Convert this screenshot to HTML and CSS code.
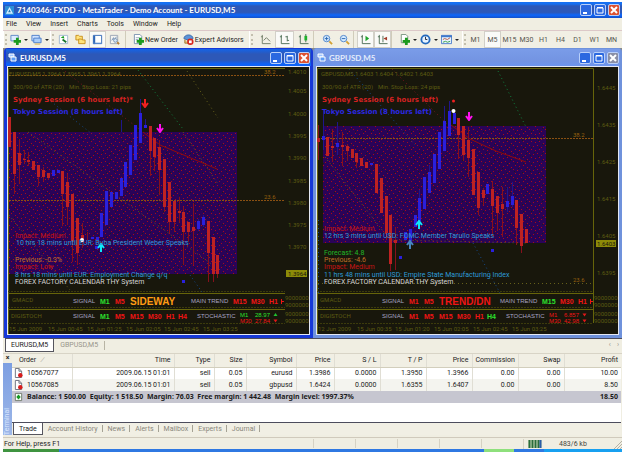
FILE: index.html
```html
<!DOCTYPE html>
<html lang="en">
<head>
<meta charset="utf-8">
<title>7140346: FXDD - MetaTrader - Demo Account - EURUSD,M5</title>
<link rel="stylesheet" href="styles.css">
</head>
<body>
<svg class="defs" aria-hidden="true">
  <defs>
    <pattern id="dots" width="16" height="16" patternUnits="userSpaceOnUse">
      <rect width="16" height="16" fill="#2a0358"/>
      <path fill="#a80d18" d="M1 1h1v1h-1zM5 2h1v1h-1zM9 1h1v1h-1zM13 3h1v1h-1zM3 5h1v1h-1zM7 6h1v1h-1zM11 5h1v1h-1zM15 7h1v1h-1zM1 9h1v1h-1zM5 10h1v1h-1zM9 9h1v1h-1zM13 11h1v1h-1zM3 13h1v1h-1zM7 14h1v1h-1zM11 13h1v1h-1zM15 15h1v1h-1z"/>
      <path fill="#1c1a20" d="M3 3h1v1h-1zM11 3h1v1h-1zM6 8h1v1h-1zM14 9h1v1h-1zM2 11h1v1h-1zM10 12h1v1h-1zM14 0h1v1h-1z"/>
    </pattern>
    <symbol id="arrow-down" viewBox="0 0 8 9"><path d="M4 0v8M1 4l3 4l3-4" fill="none" stroke="currentColor" stroke-width="2"/></symbol>
    <symbol id="arrow-up" viewBox="0 0 8 9"><path d="M4 9v-8M1 5l3-4l3 4" fill="none" stroke="currentColor" stroke-width="2"/></symbol>
    <symbol id="sell-doc" viewBox="0 0 10 11"><path d="M1.500.5h4l3 3v7h-7z" fill="#fff" stroke="#666b78"/><path d="M5.500.5v3h3" fill="none" stroke="#666b78"/><circle cx="7" cy="8" r="2.500" fill="#d81c1c"/></symbol>
    <symbol id="stacked" viewBox="0 0 9 9"><path d="M1 1h5v3h-5z" fill="#9cc4ff" stroke="#fff"/><path d="M3 4h5v4h-5z" fill="#5d9cf5" stroke="#fff"/></symbol>
  </defs>
</svg>

<div class="app">
  <header class="titlebar">
    <svg class="logo" viewBox="0 0 10 10"><rect width="10" height="10" fill="#2c8fd8"/><path d="M1 8.500L5 1l4 7.500z" fill="#d7f0ff"/><path d="M3.500 7L5 4l1.500 3z" fill="#2577b8"/></svg>
    <h1>7140346: FXDD - MetaTrader - Demo Account - EURUSD,M5</h1>
    <div class="controls">
      <button type="button" aria-label="Minimize"><svg viewBox="0 0 10 10"><path d="M2 8h4" stroke="#fff" stroke-width="2"/></svg></button>
      <button type="button" aria-label="Restore"><svg viewBox="0 0 10 10"><path d="M2 3h6v5h-6z M2 2.500h6" fill="none" stroke="#fff"/></svg></button>
      <button type="button" class="close" aria-label="Close"><svg viewBox="0 0 10 10"><path d="M2 2l6 6M8 2l-6 6" stroke="#fff" stroke-width="2"/></svg></button>
    </div>
  </header>

  <nav class="menu">
    <button type="button">File</button><button type="button">View</button><button type="button">Insert</button><button type="button">Charts</button><button type="button">Tools</button><button type="button">Window</button><button type="button">Help</button>
  </nav>

  <div class="toolbar">
    <div class="group">
      <button type="button" class="drop" aria-label="New chart"><svg viewBox="0 0 12 12"><path d="M1 1.500h8v6h-8z" fill="#dcecff" stroke="#5b85c4"/><path d="M8 4v8M4 8h8" stroke="#1b9b1e" stroke-width="3"/></svg></button>
      <button type="button" class="drop" aria-label="Profiles"><svg viewBox="0 0 12 12"><path d="M1 1.500h8v6h-8z" fill="#cfe3ff" stroke="#4b7dc9"/><path d="M3 4.500h8v5h-8z" fill="#a9cdfa" stroke="#4b7dc9"/><path d="M4 11h6" stroke="#e0b040"/></svg></button>
    </div>
    <div class="group">
      <button type="button" aria-label="Market watch"><svg viewBox="0 0 12 12"><path d="M1.500 1.500h9v9h-9z" fill="#fff" stroke="#9fb7d0"/><path d="M3 4l3-2l1 3z" fill="#19a024"/><path d="M5 6l4 3" stroke="#18752a" stroke-width="2" fill="none"/></svg></button>
      <button type="button" aria-label="Navigator"><svg viewBox="0 0 12 12"><path d="M1 1.500h3l1 1h3v4h-7z" fill="#ffe37a" stroke="#c78e1c"/><path d="M4 5.500h3l1 1h3v4h-7z" fill="#ffe37a" stroke="#c78e1c"/></svg></button>
      <button type="button" class="on" aria-label="Terminal"><svg viewBox="0 0 12 12"><path d="M1.500 1.500h9v9h-9z" fill="#fff" stroke="#2f66b5"/><path d="M2.500 2v9" stroke="#2f66b5" stroke-width="2"/><path d="M1 10h10" stroke="#5b8cd1"/></svg></button>
      <button type="button" aria-label="Strategy tester"><svg viewBox="0 0 12 12"><path d="M1.500 1.500h8v9h-8z" fill="#f4f4f0" stroke="#9aa4b4"/><path d="M3 7l2-3l1 3l2-4" stroke="#6b8bb5" fill="none"/><circle cx="7" cy="7" r="2" fill="#d5e6f7" stroke="#7790ad"/><path d="M9 9l2 2" stroke="#b5813a" stroke-width="2"/></svg></button>
    </div>
    <div class="group plain orders">
      <button type="button" class="label"><svg viewBox="0 0 12 12"><path d="M1.500.5h6l2 2v8h-8z" fill="#fff" stroke="#7890ad"/><path d="M3 4h4M3 6h3" stroke="#9aabbd"/><path d="M8 4v8M4 8h8" stroke="#1b9b1e" stroke-width="3"/></svg>New Order</button>
      <button type="button" class="label"><svg viewBox="0 0 12 12"><path d="M1 5a5 4 0 0 1 10 0l-5 2z" fill="#5c93d8" stroke="#3568ad"/><path d="M2 6v4h4" fill="#e7c072" stroke="#9d7a32"/><circle cx="8" cy="8.500" r="3.500" fill="#d8261d"/><path d="M6.500 7h3v3h-3z" fill="#fff"/></svg>Expert Advisors</button>
    </div>
    <div class="group charttype">
      <button type="button" aria-label="Line chart"><svg viewBox="0 0 12 12"><path d="M2.500 1v9.500h9M1 3h2M4 7l3-3l4 4" fill="none" stroke="#6d7a64"/></svg></button>
      <button type="button" class="on" aria-label="Bar chart"><svg viewBox="0 0 12 12"><path d="M2.500 1v9.500h9M1 3h2M9 2v6M7 3h2M9 7h2" fill="none" stroke="#496b52"/></svg></button>
      <button type="button" aria-label="Candlesticks"><svg viewBox="0 0 12 12"><path d="M2.500 1v9.500h9M1 3h2M8.500 0v9" fill="none" stroke="#496b52"/><path d="M7 2h3v5h-3z" fill="#20b12c"/></svg></button>
    </div>
    <div class="group plain zoom">
      <button type="button" aria-label="Zoom in"><svg viewBox="0 0 12 12"><circle cx="5" cy="5" r="3.500" fill="#d5ebff" stroke="#4d83c9"/><path d="M5 3v4M3 5h4" stroke="#2867b2"/><path d="M8 8l3 3" stroke="#d3a133" stroke-width="2"/></svg></button>
      <button type="button" aria-label="Zoom out"><svg viewBox="0 0 12 12"><circle cx="5" cy="5" r="3.500" fill="#d5ebff" stroke="#4d83c9"/><path d="M3 5h4" stroke="#2867b2"/><path d="M8 8l3 3" stroke="#d3a133" stroke-width="2"/></svg></button>
    </div>
    <div class="group plain">
      <button type="button" class="on" aria-label="Auto scroll"><svg viewBox="0 0 12 12"><path d="M2.500 1v9.500h9M1 3h2" fill="none" stroke="#496b52"/><path d="M6 2l4 3l-4 3z" fill="#20a42c"/></svg></button>
      <button type="button" class="on" aria-label="Chart shift"><svg viewBox="0 0 12 12"><path d="M2.500 1v9.500h9M1 3h2M6.500 2v7" fill="none" stroke="#496b52"/><path d="M11 3l-4 2l4 2z" fill="#a23a2a"/></svg></button>
    </div>
    <div class="group plain insert">
      <button type="button" class="drop" aria-label="Indicators"><svg viewBox="0 0 12 12"><path d="M2.500.5h5l2 2v7h-7z" fill="#fff" stroke="#75917a"/><path d="M8 4v8M4 8h8" stroke="#1b9b1e" stroke-width="3"/></svg></button>
      <button type="button" class="drop" aria-label="Periods"><svg viewBox="0 0 12 12"><circle cx="6" cy="6" r="4.500" fill="#e6f3ff" stroke="#2369bd" stroke-width="2"/><path d="M6 3v3h2" stroke="#223" fill="none"/></svg></button>
      <button type="button" class="drop" aria-label="Templates"><svg viewBox="0 0 12 12"><path d="M.5 1.500h11v9h-11z" fill="#e8f3ff" stroke="#4b7dc9"/><path d="M0 2.500h12" stroke="#3f79cb" stroke-width="2"/><path d="M2 6l2-1l3 1l3-2" stroke="#b2543c" fill="none"/><path d="M2 9l3-1l2 1l3-1" stroke="#31a042" fill="none"/></svg></button>
    </div>
    <div class="group periods">
      <button type="button">M1</button><button type="button" class="on">M5</button><button type="button">M15</button><button type="button">M30</button><button type="button">H1</button><button type="button">H4</button><button type="button">D1</button><button type="button">W1</button><button type="button">MN</button>
    </div>
  </div>

  <main class="charts">
    <section class="window active">
      <div class="caption">
        <svg class="logo" viewBox="0 0 9 9"><use href="#stacked"/></svg>
        <h2>EURUSD,M5</h2>
        <div class="controls">
          <button type="button" aria-label="Minimize"><svg viewBox="0 0 10 10"><path d="M2 8h4" stroke="#fff" stroke-width="2"/></svg></button>
          <button type="button" aria-label="Maximize"><svg viewBox="0 0 10 10"><path d="M2 2.500h6v5.500h-6z M2 3h6" fill="none" stroke="#fff"/></svg></button>
          <button type="button" class="close" aria-label="Close"><svg viewBox="0 0 10 10"><path d="M2 2l6 6M8 2l-6 6" stroke="#fff" stroke-width="2"/></svg></button>
        </div>
      </div>
      <svg class="plot" viewBox="8 67 301 267">
        <rect x="8" y="67" width="301" height="267" fill="#18170c"/>
        <rect x="9" y="132" width="228" height="142" fill="url(#dots)"/>
        <path class="frame" d="M8.500 334V68.500H285M8 293.500H285M8 309.500H285"/>
        <path class="frame faint" d="M8 291.500H285M8 307.500H285M8 323.500H285" stroke-dasharray="2 1"/>
        <path class="fib" d="M9 75.500H285M9 200.500H285"/>
        <path class="trend olive" d="M28 132L217 268M187 71L218 118M183 132L218 184M9 215L70 290"/>
        <path class="trend red" d="M62 69L143 132"/>
        <path class="trend green" d="M138 70L183 129"/>
        <path class="trend blue" d="M48 99L92 134M190 275L202 292"/>
        <path d="M143 132L160 145L217 169" fill="none" stroke="#920a0a"/>
        <path class="wick down" d="M14.500 132V194M19.500 139V184M24.500 150V164M28.500 152V166M38.500 165V186M43.500 167V181M48.500 173V180M62.500 171V226M67.500 174V225M72.500 194V262M77.500 218V265M82.500 223V248M87.500 232V240M150.500 126V176M154.500 138V171M159.500 140V195M164.500 159V212M169.500 182V233M174.500 201V232M179.500 197V223M183.500 207V265M188.500 222V242M193.500 203V265M208.500 221V282M213.500 237V282M217.500 255V278"/>
        <path class="body down" d="M9.500 117V147M14.500 132V174M19.500 153V165M24.500 159V160M28.500 160V162M33.500 161V170M38.500 165V177M43.500 170V177M48.500 173V178M62.500 171V194M67.500 182V207M72.500 194V241M77.500 218V253M82.500 235V242M150.500 126V151M154.500 138V157M159.500 147V170M164.500 159V207M169.500 182V222M174.500 201V222M179.500 211V213M183.500 212V232M188.500 222V232M193.500 227V231M208.500 221V253M213.500 237V274M217.500 255V274"/>
        <path class="wick up" d="M140.500 99V113M145.500 119V125M121.500 120V132M198.500 219V231M203.500 215V227"/>
        <path class="body up" d="M53.500 170V176M58.500 170V173M92.500 237V239M97.500 237V240M96.500 246V249M101.500 213V237M106.500 191V225M111.500 192V207M116.500 192V199M121.500 178V196M125.500 162V187M130.500 145V175M135.500 125V160M140.500 113V143M145.500 125V128M198.500 221V229M203.500 217V225M183.500 280V283"/>
        <use href="#arrow-down" x="141" y="99" width="8" height="9" color="#f02020"/>
        <use href="#arrow-down" x="156" y="124" width="8" height="9" color="#ff10f0"/>
        <use href="#arrow-up" x="97" y="243" width="8" height="9" color="#10e8f8"/>
        <circle cx="82" cy="240" r="2" fill="#fff"/>
        <g class="dim">
          <text x="9" y="76">EURUSD,M5 1.3964 1.3965 1.3961 1.3964</text>
          <text x="13" y="89">300/90 of ATR (20)</text><text x="69" y="89">Min. Stop Loss: 21 pips</text>
          <text x="12" y="302">GMACD</text><text x="11" y="318">DIGISTOCH</text>
          <text x="9" y="331">15 Jun 2009</text><text x="48" y="331">15 Jun 00:45</text><text x="87" y="331">15 Jun 01:25</text><text x="126" y="331">15 Jun 02:05</text><text x="164" y="331">15 Jun 02:45</text><text x="203" y="331">15 Jun 03:25</text>
          <text x="288" y="74">1.4010</text><text x="288" y="93">1.4005</text><text x="288" y="116">1.4000</text><text x="288" y="138">1.3995</text><text x="288" y="160">1.3990</text><text x="288" y="183">1.3985</text><text x="288" y="205">1.3980</text><text x="288" y="227">1.3975</text><text x="288" y="249">1.3970</text>
          <text x="285" y="300">9000000</text><text x="285" y="307">9000000</text><text x="285" y="316">9000000</text><text x="285" y="323">9000000</text>
        </g>
        <g class="fiblabel"><text x="264" y="74">38.2</text><text x="264" y="199">23.6</text></g>
        <rect x="286" y="270" width="21" height="7" fill="#8d8b08"/><text class="tag" x="288" y="276">1.3964</text>
        <g class="session"><text class="r" x="13" y="102">Sydney Session (6 hours left)*</text><text class="b" x="13" y="114">Tokyo Session (8 hours left)</text></g>
        <g class="news">
          <text class="r" x="15" y="238">Impact: Medium</text><text class="c" x="16" y="245">10 hrs 18 mins until EUR: Buba President Weber Speaks</text>
          <text class="o" x="15" y="262">Previous: -0.3%</text><text class="r" x="15" y="269">Impact: Low</text><text class="c" x="15" y="277">8 hrs 18 mins until EUR: Employment Change q/q</text>
          <text class="w" x="15" y="284">FOREX FACTORY CALENDAR THY System</text>
        </g>
        <g class="signal">
          <text class="l" x="73" y="303">SIGNAL</text><text class="g" x="100" y="304">M1</text><text class="r" x="115" y="304">M5</text><text class="big o" x="130" y="305">SIDEWAY</text><text class="l" x="191" y="303">MAIN TREND</text><text class="r" x="233" y="304">M15</text><text class="r" x="251" y="304">M30</text><text class="r" x="269" y="304">H1</text>
          <text class="l" x="73" y="318">SIGNAL</text><text class="g" x="100" y="319">M1</text><text class="r" x="115" y="319">M5</text><text class="r" x="130" y="319">M15</text><text class="r" x="148" y="319">M30</text><text class="r" x="166" y="319">H1</text><text class="r" x="178" y="319">H4</text><text class="l" x="197" y="318">STOCHASTIC</text>
          <path class="r" d="M281 299h1v5h-1zM282 301h2v1h-2z"/>
          <g class="mini"><text class="g" x="240" y="317">M1</text><text class="g" x="255" y="317">28.97</text><text class="r" x="240" y="323">M30</text><text class="r" x="255" y="323">27.84</text></g>
        </g>
        <path d="M273.500 316l2-3l2 3z" fill="#20c030"/><path d="M273.500 319.500l2 3l2-3z" fill="#e01818"/>
      </svg>
    </section>

    <section class="window">
      <div class="caption">
        <svg class="logo" viewBox="0 0 9 9"><use href="#stacked"/></svg>
        <h2>GBPUSD,M5</h2>
        <div class="controls">
          <button type="button" aria-label="Minimize"><svg viewBox="0 0 10 10"><path d="M2 8h4" stroke="#fff" stroke-width="2"/></svg></button>
          <button type="button" aria-label="Maximize"><svg viewBox="0 0 10 10"><path d="M2 2.500h6v5.500h-6z M2 3h6" fill="none" stroke="#fff"/></svg></button>
          <button type="button" class="close" aria-label="Close"><svg viewBox="0 0 10 10"><path d="M2 2l6 6M8 2l-6 6" stroke="#fff" stroke-width="2"/></svg></button>
        </div>
      </div>
      <svg class="plot" viewBox="317 67 301 267">
        <rect x="317" y="67" width="301" height="267" fill="#18170c"/>
        <rect x="323" y="126" width="223" height="117" fill="url(#dots)"/>
        <path class="frame" d="M317.500 334V68.500H593.500V323M317 293.500H593M317 309.500H593"/>
        <path class="frame faint" d="M317 291.500H593M317 307.500H593M317 323.500H593" stroke-dasharray="2 1"/>
        <path class="fib" d="M318 138.500H593"/>
        <path class="trend olive" d="M325 157L390 240L526 243M318 283.500H593"/>
        <path class="trend red" d="M392 69L453 130"/>
        <path class="trend green" d="M498 71L526 127"/>
        <path class="trend blue" d="M349 69L415 145M473 243L500 293M318.500 220V293"/>
        <path d="M451 125L470 139L496 151L526 162" fill="none" stroke="#920a0a"/>
        <path class="wick down" d="M318.500 125V160M332.500 129V162M342.500 132V166M347.500 144V161M356.500 153V168M386.500 196V240M390.500 215V271M395.500 227V270M458.500 118V159M463.500 126V161M468.500 127V177M483.500 188V205M478.500 172V215M492.500 181V236M497.500 196V231M502.500 187V237M516.500 200V245M521.500 214V253"/>
        <path class="body down" d="M318.500 138V142M327.500 137V156M332.500 146V148M342.500 145V147M347.500 146V151M352.500 149V158M356.500 153V162M361.500 158V166M366.500 162V168M376.500 164V193M381.500 178V213M386.500 196V233M390.500 215V264M395.500 240V243M458.500 118V135M463.500 126V155M468.500 140V158M473.500 149V195M478.500 172V208M483.500 190V198M492.500 189V206M497.500 196V213M502.500 204V209M516.500 200V228M521.500 214V246M526.500 229V243"/>
        <path class="wick up" d="M323.500 114V150M337.500 122V155M444.500 106V121M449.500 101V111M507.500 187V212M512.500 182V207M429.500 165V172M419.500 190V198"/>
        <path class="body up" d="M323.500 136V140M337.500 143V147M371.500 163V165M405.500 232V240M410.500 229V241M415.500 215V227M419.500 198V221M424.500 177V209M429.500 172V193M434.500 154V183M439.500 132V169M444.500 121V151M449.500 111V136M454.500 113V124M400.500 256V259M487.500 184V194M507.500 201V207M512.500 196V205M492.500 249V252"/>
        <use href="#arrow-down" x="465" y="112" width="8" height="9" color="#ff10f0"/>
        <use href="#arrow-up" x="415" y="220" width="8" height="9" color="#10e8f8"/>
        <use href="#arrow-up" x="406" y="240" width="8" height="9" color="#4686c0"/>
        <circle cx="453.500" cy="111" r="2" fill="#fff"/><circle cx="453.500" cy="101" r="1.500" fill="#f02020"/>
        <g class="dim">
          <text x="321" y="76">GBPUSD,M5 1.6403 1.6404 1.6402 1.6403</text>
          <text x="322" y="89">300/90 of ATR (20)</text><text x="378" y="89">Min. Stop Loss: 24 pips</text>
          <text x="320" y="302">GMACD</text><text x="320" y="318">DIGISTOCH</text>
          <text x="318" y="331">12 Jun 2009</text><text x="357" y="331">15 Jun 00:35</text><text x="395" y="331">15 Jun 01:20</text><text x="434" y="331">15 Jun 02:05</text><text x="473" y="331">15 Jun 02:45</text><text x="512" y="331">15 Jun 03:25</text>
          <text x="597" y="90">1.6445</text><text x="597" y="127">1.6435</text><text x="597" y="164">1.6425</text><text x="597" y="201">1.6415</text><text x="597" y="238">1.6405</text><text x="597" y="275">1.6395</text>
          <text x="594" y="300">9000000</text><text x="594" y="307">9000000</text><text x="594" y="316">9000000</text><text x="594" y="323">9000000</text>
        </g>
        <g class="fiblabel"><text x="573" y="137">38.2</text><text x="573" y="282">23.6</text></g>
        <rect x="596" y="240" width="20" height="7" fill="#8d8b08"/><text class="tag" x="597" y="246">1.6403</text>
        <g class="session"><text class="r" x="322" y="102">Sydney Session (6 hours left)</text><text class="b" x="322" y="114">Tokyo Session (8 hours left)</text></g>
        <g class="news">
          <text class="r" x="324" y="231">Impact: Medium</text><text class="c" x="324" y="238">12 hrs 3 mins until USD: FOMC Member Tarullo Speaks</text>
          <text class="g" x="324" y="255">Forecast: 4.8</text><text class="o" x="324" y="262">Previous: -4.6</text><text class="r" x="324" y="269">Impact: Medium</text><text class="c" x="324" y="277">11 hrs 48 mins until USD: Empire State Manufacturing Index</text>
          <text class="w" x="324" y="284">FOREX FACTORY CALENDAR THY System</text>
        </g>
        <g class="signal">
          <text class="l" x="382" y="303">SIGNAL</text><text class="r" x="409" y="304">M1</text><text class="r" x="424" y="304">M5</text><text class="big r" x="439" y="305">TREND/DN</text><text class="l" x="500" y="303">MAIN TREND</text><text class="g" x="542" y="304">M15</text><text class="r" x="560" y="304">M30</text><text class="r" x="578" y="304">H1</text>
          <text class="l" x="382" y="318">SIGNAL</text><text class="r" x="409" y="319">M1</text><text class="r" x="424" y="319">M5</text><text class="r" x="439" y="319">M15</text><text class="r" x="457" y="319">M30</text><text class="r" x="475" y="319">H1</text><text class="g" x="487" y="319">H4</text><text class="l" x="506" y="318">STOCHASTIC</text>
          <path class="r" d="M590 299h1v5h-1zM591 301h2v1h-2z"/>
          <g class="mini"><text class="r" x="549" y="317">M1</text><text class="r" x="564" y="317">6.857</text><text class="r" x="549" y="323">M30</text><text class="r" x="564" y="323">42.98</text></g>
        </g>
        <path d="M582.500 313.500l2 3l2-3zM582.500 319.500l2 3l2-3z" fill="#e01818"/>
      </svg>
    </section>
  </main>

  <nav class="charttabs">
    <button type="button" class="current">EURUSD,M5</button><button type="button">GBPUSD,M5</button>
    <div class="scroll"><button type="button" aria-label="Scroll left">‹</button><button type="button" aria-label="Scroll right">›</button></div>
  </nav>

  <section class="terminal">
    <div class="side"><button type="button" aria-label="Close terminal">×</button><span>Terminal</span></div>
    <div class="pane">
      <table>
        <colgroup><col class="w-order"><col class="w-time"><col class="w-type"><col class="w-size"><col class="w-symbol"><col class="w-price"><col class="w-mid"><col class="w-mid"><col class="w-mid"><col class="w-mid"><col class="w-mid"><col class="w-profit"></colgroup>
        <thead><tr><th>Order<i>∕</i></th><th>Time</th><th>Type</th><th>Size</th><th>Symbol</th><th>Price</th><th>S / L</th><th>T / P</th><th>Price</th><th>Commission</th><th>Swap</th><th>Profit</th></tr></thead>
        <tbody>
          <tr><td><svg viewBox="0 0 10 11"><use href="#sell-doc"/></svg>10567077</td><td>2009.06.15 01:01</td><td>sell</td><td>0.05</td><td>eurusd</td><td>1.3986</td><td>0.0000</td><td>1.3950</td><td>1.3966</td><td>0.00</td><td>0.00</td><td>10.00</td></tr>
          <tr class="alt"><td><svg viewBox="0 0 10 11"><use href="#sell-doc"/></svg>10567085</td><td>2009.06.15 01:01</td><td>sell</td><td>0.05</td><td>gbpusd</td><td>1.6424</td><td>0.0000</td><td>1.6355</td><td>1.6407</td><td>0.00</td><td>0.00</td><td>8.50</td></tr>
        </tbody>
        <tfoot><tr><td colspan="11"><svg viewBox="0 0 10 11"><path d="M1.500 1.500h7v8h-7z" fill="#fff" stroke="#6b7566"/><path d="M5 3v5M3 5.500h4" stroke="#159a22" stroke-width="2"/></svg>Balance: 1 500.00&nbsp; Equity: 1 518.50&nbsp; Margin: 76.03&nbsp; Free margin: 1 442.48&nbsp; Margin level: 1997.37%</td><td>18.50</td></tr></tfoot>
      </table>
      <nav class="panetabs">
        <button type="button" class="current">Trade</button><button type="button">Account History</button><button type="button">News</button><button type="button">Alerts</button><button type="button">Mailbox</button><button type="button">Experts</button><button type="button">Journal</button>
      </nav>
    </div>
  </section>

  <footer class="status">
    <span class="help">For Help, press F1</span>
    <span class="cell"></span><span class="cell"></span><span class="cell"></span><span class="cell"></span><span class="cell"></span>
    <span class="net"><svg viewBox="0 0 14 8"><rect width="14" height="8" fill="#d5dfc0"/><path d="M1.500 0v8M4.500 0v8M7.500 0v8M10.500 0v8" stroke="#2b6c3c" stroke-width="2"/><path d="M12.500 0v8" stroke="#2a5ca8" stroke-width="2"/></svg>483/6 kb</span>
    <svg class="grip" viewBox="0 0 8 8"><path d="M0 8L8 0M3 8L8 3M6 8l2-2" stroke="#b5b2a4"/></svg>
  </footer>
  <div class="taskbar"><span class="start"></span><span class="task"></span><span class="tray"></span></div>
</div>
</body>
</html>
```
FILE: styles.css
```css
* { box-sizing: border-box; }
body { margin: 0; background: #fff; font: 7px/10px Roboto, "Liberation Sans", sans-serif; color: #1c1c1c; }
button { border: 0; padding: 0; margin: 0; background: none; font: inherit; color: inherit; display: block; }
h1, h2 { margin: 0; font: bold 8px/12px Lato, "Liberation Sans", sans-serif; color: #fff; white-space: nowrap; }
.defs { position: absolute; width: 0; height: 0; }
.app { margin: 2px 3px 0; background: #f0eee2; }

.titlebar, .caption { display: flex; align-items: center; }
.titlebar { height: 16px; padding: 0 2px; background: linear-gradient(#1670f2 0 12%, #2d58b8 25% 65%, #0d66fa 82%, #1450c8); }
.titlebar .logo { width: 9px; height: 9px; margin-right: 3px; }
.controls { display: flex; gap: 2px; margin-left: auto; }
.controls button { width: 12px; height: 12px; border: 1px solid #b9d0fa; border-radius: 2px; background: #2b68e0; }
.controls svg { display: block; width: 10px; height: 10px; }
.controls .close { background: #dd5230; }

.menu { display: flex; height: 13px; gap: 9px; padding: 1px 3px; border-bottom: 1px solid #dcc8c8; }
.menu button { line-height: 11px; }

.toolbar { display: flex; align-items: center; height: 17px; padding-right: 2px; background: #f1efe4; }
.group { display: flex; align-items: center; padding-left: 4px; border-left: 1px solid #fff; position: relative; }
.group:not(.plain)::before { content: ""; position: absolute; left: 1px; top: 3px; height: 11px; border-left: 2px dotted #c3bfae; }
.group.plain { padding-left: 3px; border-left-color: #d0ccba; }
.group button { display: flex; align-items: center; justify-content: center; width: 17px; height: 17px; border: 1px solid transparent; white-space: nowrap; }
.group svg { width: 11px; height: 11px; flex: none; }
.group .drop { width: 21px; justify-content: flex-start; padding-left: 1px; }
.drop::after { content: ""; margin-left: 3px; border: 2px solid transparent; border-top-color: #222; border-bottom: 0; }
.group .on { background: #fafaf8; border-color: #d2d0c8; }
.group .label { width: auto; gap: 1px; padding: 0 0 0 3px; }
.group.orders { margin-left: 2px; }
.group.zoom, .group.insert { padding-left: 5px; }
.group.periods { margin-left: auto; color: #55554e; }
.group.charttype { margin-left: 4px; padding-left: 6px; }
.charttype button { width: 19px; }

.charts { display: grid; grid-template-columns: 1fr 1fr; padding-left: 1px; background: #8d8b84; }
.window { border: solid #6f92dc; border-width: 1px 3px 3px; background: #e4e8f4; border-radius: 4px 4px 0 0; }
.window.active { border-color: #1638d8; }
.caption { height: 17px; margin: 0 -1px; padding: 0 1px 0 2px; background: linear-gradient(#7a9ce8, #7394e2 70%, #6c95ee); }
.active .caption { background: linear-gradient(#1464e8, #2d58b8 30% 65%, #0d62f8 88%); }
.caption .logo { width: 9px; height: 9px; margin-right: 3px; }
.caption h2 { color: #e3ebfb; }
.active .caption h2 { color: #fff; }
.window:not(.active) .close { background: #8a8fa6; }
.plot { display: block; width: auto; margin: 1px; height: auto; }

.plot text { font: 6px Roboto, "Liberation Sans", sans-serif; }
.frame { fill: none; stroke: #66640a; }
.faint { stroke: #3c3b0c; }
.fib { stroke: #8a5012; stroke-dasharray: 2 1; }
.trend { fill: none; stroke-dasharray: 1 3; }
.olive { stroke: #66601a; }
.trend.red { stroke: #7c1420; }
.trend.green { stroke: #0f8040; }
.trend.blue { stroke: #13488a; }
.wick.down { stroke: #86101c; }
.wick.up { stroke: #20168a; }
.body { stroke-width: 3; }
.body.down { stroke: #be2222; }
.body.up { stroke: #2a20dc; }
.dim { fill: #5e5c12; }
.fiblabel { fill: #96600f; }
.tag { fill: #18170c; }
.plot .session text { font: bold 7px "DejaVu Sans", sans-serif; }
.session .r { fill: #d42222; }
.session .b { fill: #2c28e0; }
.plot .news text { font: 7px Roboto, "Liberation Sans", sans-serif; }
.news .r { fill: #c81414; }
.news .c { fill: #2e9cd8; }
.news .o { fill: #c07028; }
.news .g { fill: #20b828; }
.news .w { fill: #d4d4d4; }
.plot .signal text { font: bold 7px "Liberation Sans", sans-serif; }
.plot .signal .l { font: 6px "Liberation Sans", sans-serif; fill: #a9a6c4; }
.plot .signal .big { font: bold 10px "Liberation Sans", sans-serif; }
.plot .signal .mini text { font: 6px "Liberation Sans", sans-serif; }
.signal .r { fill: #f01414; }
.signal .g { fill: #2ce02c; }
.signal .o { fill: #ff9c14; }

.charttabs { display: flex; height: 14px; margin-left: 2px; border-top: 1px solid #4c4c5c; }
.charttabs button { padding: 0 6px; border-right: 1px solid #b8b4a4; margin: 2px 0; line-height: 9px; color: #98958a; }
.charttabs .current { margin: 0; padding: 0 5px; line-height: 12px; background: #fff; color: #1c1c1c; border: 1px solid #55555e; border-top: 0; }
.scroll { display: flex; gap: 6px; margin-left: auto; padding-right: 3px; }
.charttabs .scroll button { padding: 0; border: 0; }

.terminal { display: grid; grid-template-columns: 9px 1fr; margin-top: 1px; padding-right: 1px; border-top: 1px solid #d8d4c6; }
.side { display: flex; flex-direction: column; align-items: center; background: linear-gradient(#f0eee2 9px, #7d9fe2 9px, #9db7e8); }
.side button { height: 9px; line-height: 9px; font-weight: bold; }
.side span { margin-top: auto; writing-mode: vertical-rl; transform: rotate(180deg); line-height: 9px; color: #dce8ff; }
.pane { background: #fff; }
table { width: 100%; table-layout: fixed; border-collapse: collapse; }
th, td { height: 12px; padding: 0 3px; text-align: right; font-weight: normal; white-space: nowrap; border-right: 1px solid #e0ded4; }
th:last-child, td:last-child { border-right: 0; }
th { height: 13px; background: #f1efe4; border-bottom: 1px solid #d2cebc; }
th:first-child { text-align: left; padding-left: 7px; }
th i { margin-left: 6px; color: #a8a59a; }
td:first-child { text-align: left; padding-left: 2px; }
td svg { width: 9px; height: 10px; margin-right: 4px; vertical-align: middle; }
.alt { background: #f4f4ef; }
tfoot td { background: #c6c6d0; font-family: "Noto Sans", sans-serif; font-weight: bold; border: 0; }
.w-order { width: 60px; } .w-time { width: 102px; } .w-type { width: 40px; } .w-size { width: 32px; }
.w-symbol { width: 50px; } .w-price { width: 38px; } .w-mid { width: 46px; } .w-profit { width: 57px; }
.panetabs { display: flex; height: 13px; margin-top: 19px; background: #f1efe4; border-top: 1px solid #4c4c5c; }
.panetabs button { position: relative; padding: 0 5px; line-height: 12px; color: #8a877c; }
.panetabs button:not(.current)::after { content: ""; position: absolute; right: 0; top: 2px; height: 7px; border-right: 1px solid #a5a294; }
.panetabs .current { margin-left: 1px; background: #fff; color: #1c1c1c; border: 1px solid #55555e; border-top: 0; }

.status { display: flex; align-items: center; height: 12px; margin-top: 2px; border-top: 1px solid #d0cabc; }
.help { flex: 1; padding-left: 1px; }
.cell { width: 42px; height: 9px; border-left: 1px solid #d6d2c4; }
.net { display: flex; align-items: center; gap: 17px; width: 91px; padding-left: 4px; border-left: 1px solid #d6d2c4; color: #44443e; }
.net svg { width: 14px; height: 8px; }
.grip { width: 8px; height: 8px; align-self: flex-end; }
.taskbar { display: flex; height: 3px; background: #2f78e2; }
.start { width: 56px; background: #3f9440; }
.task { width: 30px; margin-left: auto; background: #8ee07c; }
.tray { width: 78px; margin-left: 30px; background: #18a0f0; }
```
